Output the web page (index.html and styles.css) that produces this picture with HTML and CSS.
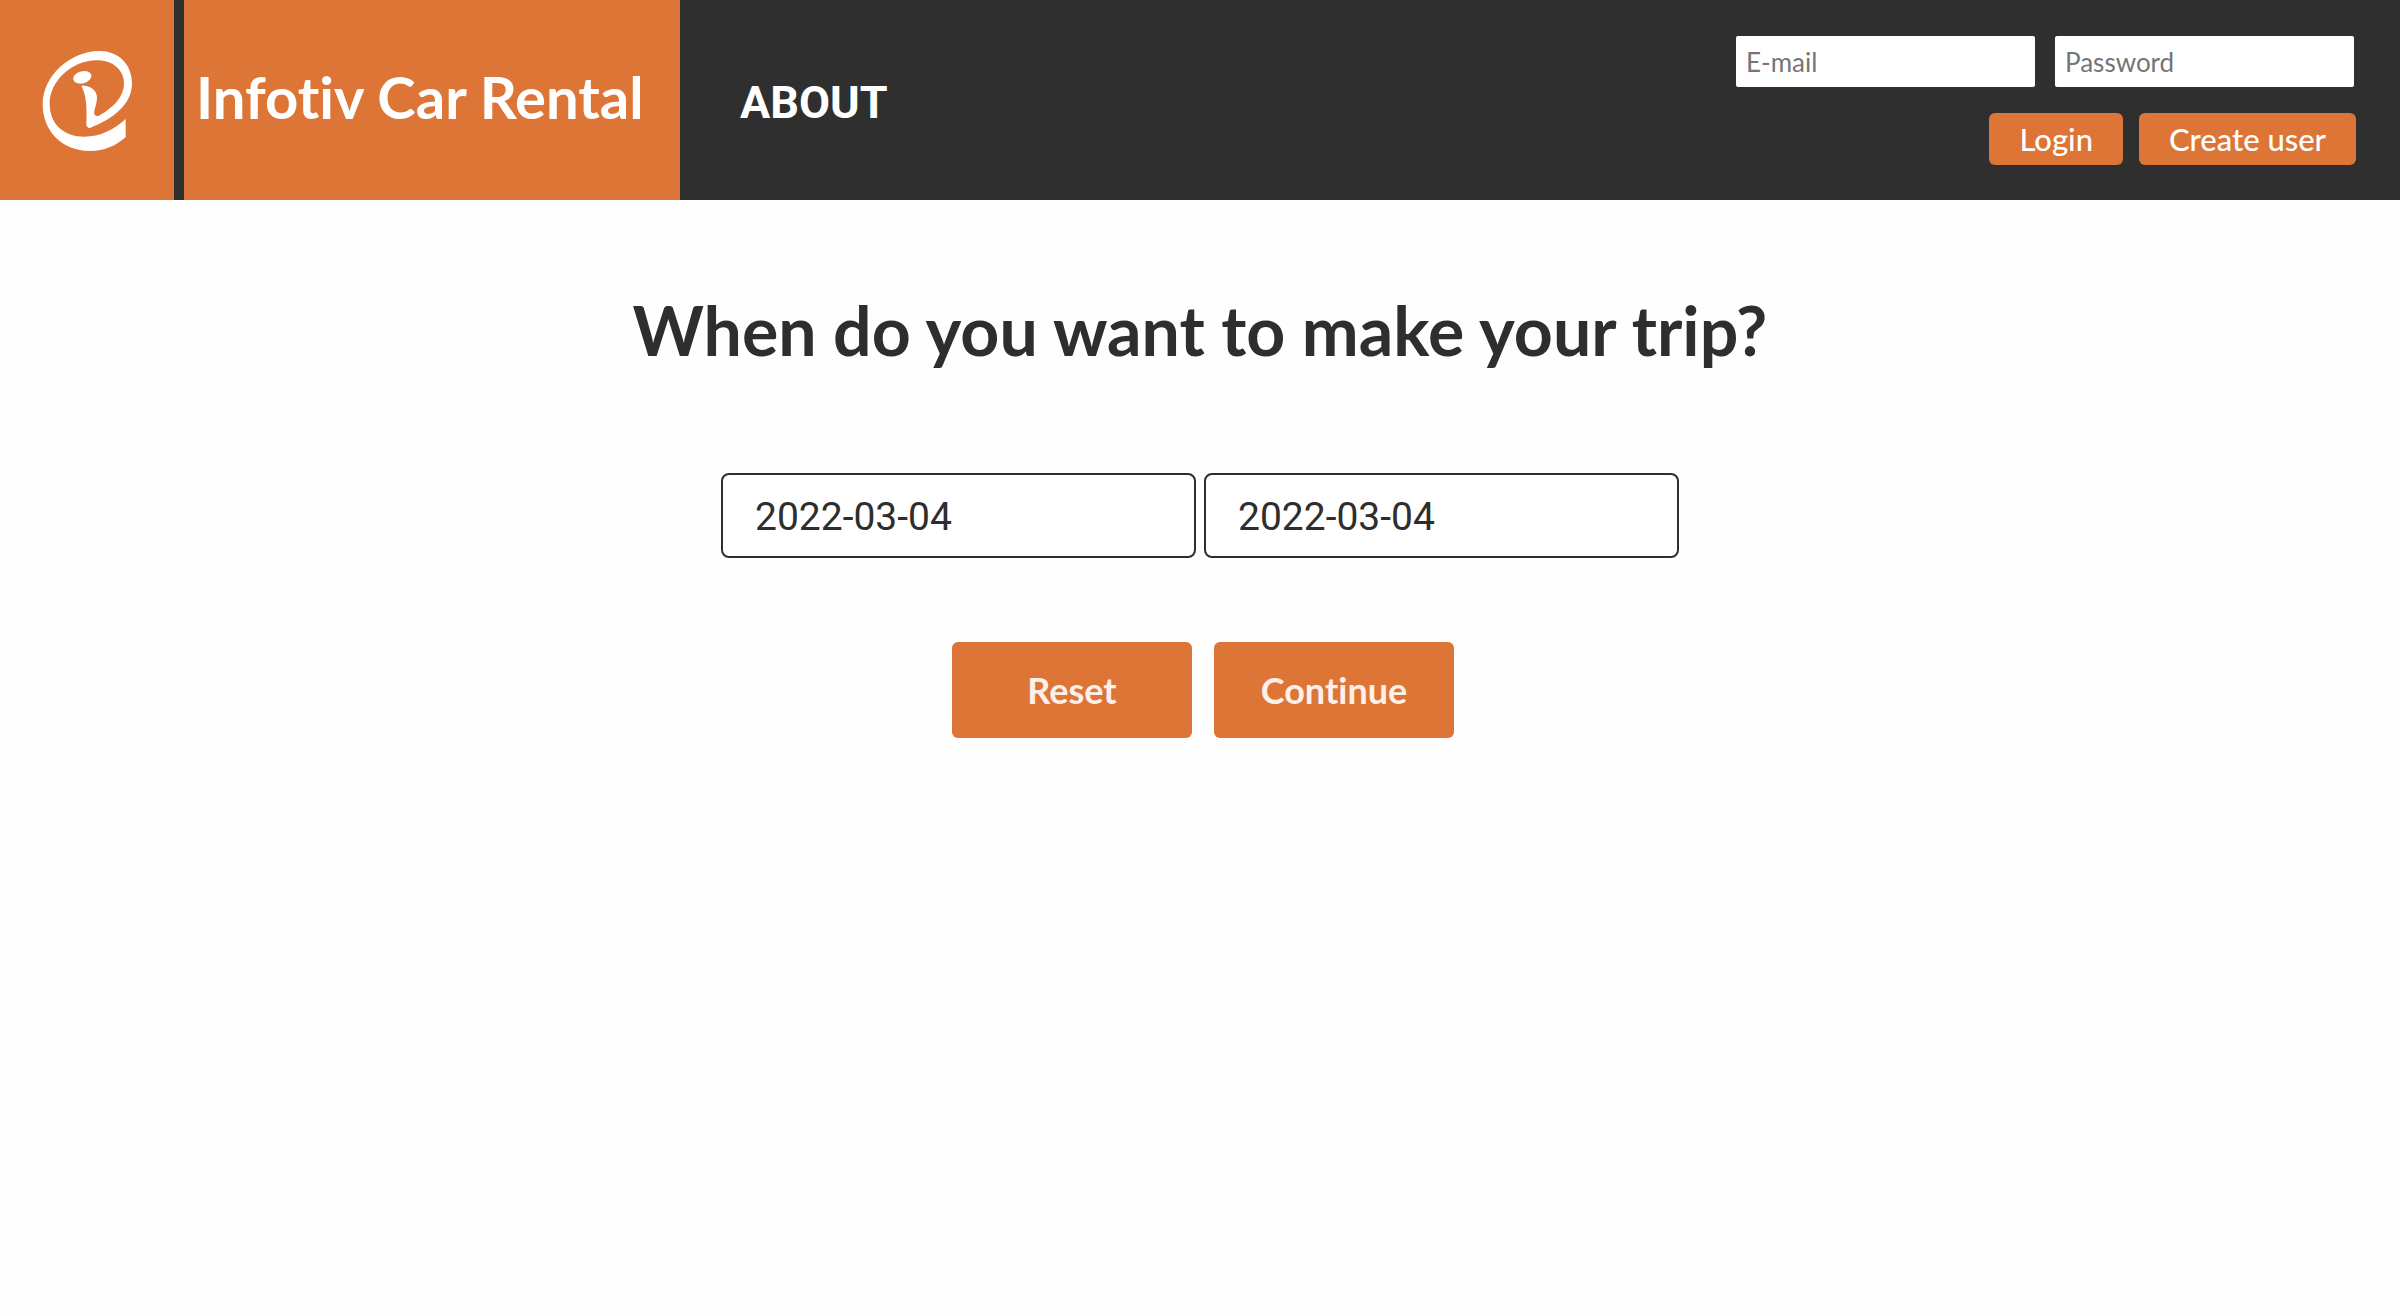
FILE: index.html
```html
<!DOCTYPE html>
<html lang="en">
<head>
<meta charset="utf-8">
<meta name="viewport" content="width=device-width, initial-scale=1">
<title>Infotiv Car Rental</title>
<link rel="stylesheet" href="styles.css">
</head>
<body>
<header class="site-header">
  <a class="logo" href="#" aria-label="Infotiv">
    <svg class="logo-mark" viewBox="0 0 522 600" aria-hidden="true">
      <path d="M377 412C347 438 312 453 270 453C183 453 128 390 128 313C128 226 213 153 298 153C357 153 396 194 396 250C396 312 342 356 270 384C262 384 259 379 259 373C261 330 260 287 245 260C245 257 249 256 254 257C275 260 290 272 291 291C292 308 284 323 282 338C284 347 289 349 297 347C334 327 372 294 372 250C372 211 340 181 291 181C216 181 149 243 149 311C149 374 194 410 252 410C301 410 342 389 377 357Z"/>
      <ellipse cx="247" cy="232" rx="28" ry="18" transform="rotate(-14 247 232)"/>
    </svg>
  </a>
  <a class="brand" href="#">Infotiv Car Rental</a>
  <nav class="main-nav"><a class="nav-link" href="#">ABOUT</a></nav>
  <form class="login">
    <div class="login-fields">
      <input class="login-input" type="email" placeholder="E-mail" aria-label="E-mail">
      <input class="login-input" type="password" placeholder="Password" aria-label="Password">
    </div>
    <div class="login-actions">
      <button class="small-button" type="submit">Login</button>
      <button class="small-button" type="button">Create user</button>
    </div>
  </form>
</header>
<main class="trip">
  <h1 class="question">When do you want to make your trip?</h1>
  <form class="trip-form">
    <div class="dates">
      <input class="date-input" type="text" value="2022-03-04" aria-label="Start date">
      <input class="date-input" type="text" value="2022-03-04" aria-label="End date">
    </div>
    <div class="trip-actions">
      <button class="big-button" type="reset">Reset</button>
      <button class="big-button" type="submit">Continue</button>
    </div>
  </form>
</main>
</body>
</html>
```
FILE: styles.css
```css
* {
  box-sizing: border-box;
}

body {
  margin: 0;
  background: #fefefe;
  color: #2e2e2e;
  font-family: Lato, "Open Sans", sans-serif;
  font-variant-ligatures: none;
}

input,
button {
  font-family: inherit;
  font-variant-ligatures: inherit;
}

a {
  color: #fff;
  text-decoration: none;
}

.site-header {
  display: flex;
  min-height: 200px;
  background: #2f2f2f;
}

.logo {
  display: flex;
  width: 174px;
  margin-right: 10px;
  background: #dd7536;
}

.logo-mark {
  width: 100%;
  fill: #fff;
}

.brand {
  display: flex;
  align-items: center;
  padding: 0 36px 8px 12px;
  width: 496px;
  background: #dd7536;
  font-size: 58px;
  font-weight: 700;
  white-space: nowrap;
}

.main-nav {
  display: flex;
  align-items: center;
  padding: 4px 0 0 60px;
}

.nav-link {
  font-family: Roboto, sans-serif;
  font-size: 45px;
  font-weight: 700;
}

.login {
  display: flex;
  flex-direction: column;
  align-items: flex-end;
  gap: 26px;
  margin-left: auto;
  padding: 36px 44px 0 0;
}

.login-fields {
  display: flex;
  gap: 20px;
  padding-right: 2px;
}

.login-input {
  width: 299px;
  height: 51px;
  padding: 0 10px;
  border: 0;
  border-radius: 2px;
  background: #fff;
  color: #2e2e2e;
  font-size: 26px;
}

.login-input::placeholder {
  color: #757575;
}

.login-actions {
  display: flex;
  gap: 16px;
}

.small-button {
  height: 52px;
  padding: 0 30px;
  border: 0;
  border-radius: 6px;
  background: #dd7536;
  color: #fff;
  font-size: 31px;
  font-weight: 500;
}

.trip {
  padding: 86px 40px 40px;
}

.question {
  margin: 0 0 99px;
  font-size: 68px;
  font-weight: 700;
  line-height: 88px;
  text-align: center;
}

.trip-form {
  display: flex;
  flex-direction: column;
  align-items: center;
  gap: 84px;
}

.dates {
  display: flex;
  gap: 8px;
}

.date-input {
  width: 475px;
  height: 85px;
  padding: 2px 32px 0;
  border: 2px solid #2e2e2e;
  border-radius: 8px;
  background: #fff;
  color: #2e2e2e;
  font-family: Roboto, sans-serif;
  font-size: 39px;
}

.trip-actions {
  display: flex;
  gap: 22px;
  padding-left: 6px;
}

.big-button {
  width: 240px;
  height: 96px;
  padding: 0;
  border: 0;
  border-radius: 6px;
  background: #dd7536;
  color: #fdf0ea;
  font-size: 36px;
  font-weight: 700;
}
```
